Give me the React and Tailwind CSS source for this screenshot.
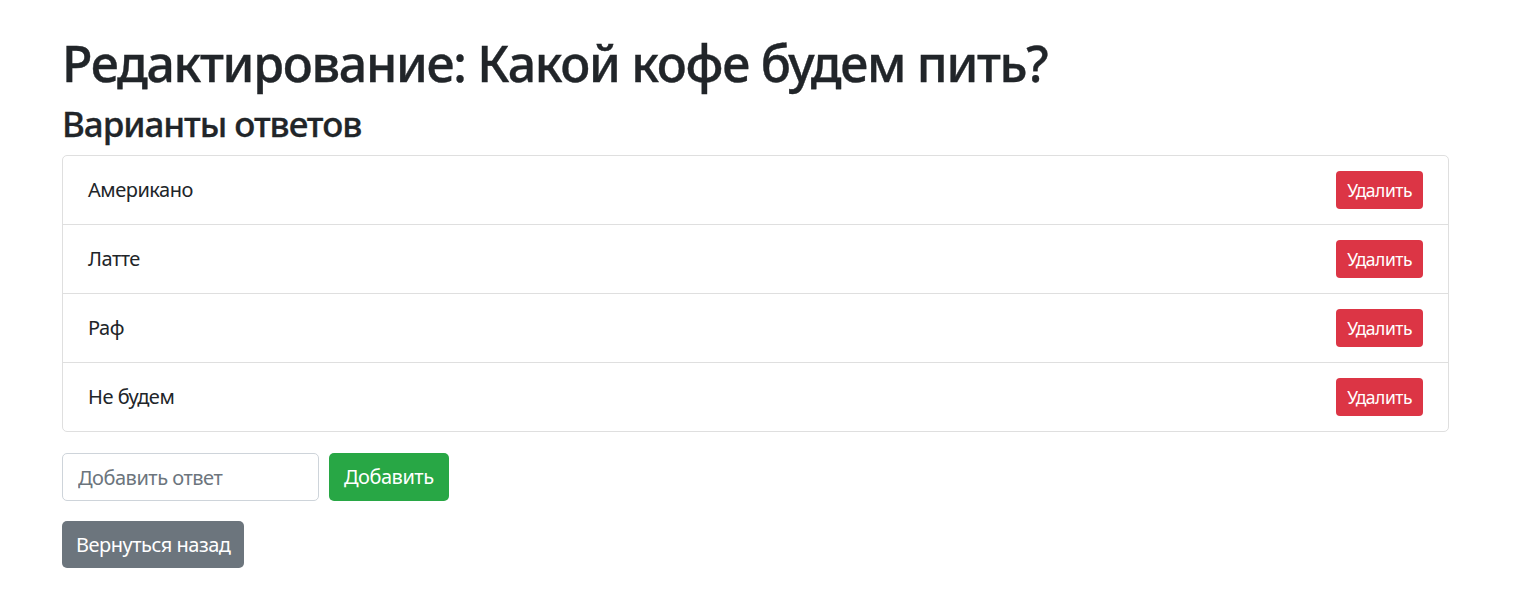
import React, { useState } from "react";

function App() {
  const [answers, setAnswers] = useState(["Американо", "Латте", "Раф", "Не будем"]);
  const [text, setText] = useState("");

  const addAnswer = (e) => {
    e.preventDefault();
    if (!text.trim()) return;
    setAnswers([...answers, text.trim()]);
    setText("");
  };

  return (
    <div className="min-h-screen bg-white font-['Noto_Sans',sans-serif] tracking-[-0.03em] text-[#212529]">
      <div className="mx-auto max-w-[1425px] pl-[18px] pr-[20px] pt-[33px]">
        <h1 className="mb-[10px] text-[50px] font-medium leading-[1.2] tracking-[-0.026em] [-webkit-text-stroke:0.4px_#212529]">
          Редактирование: Какой кофе будем пить?
        </h1>
        <h3 className="mb-[10px] text-[35px] font-medium leading-[1.2] tracking-[-0.03em] [-webkit-text-stroke:0.3px_#212529]">
          Варианты ответов
        </h3>
        <ul className="rounded-[5px] border border-[#dfdfdf]">
          {answers.map((item, i) => (
            <li
              key={i}
              className="flex items-center justify-between border-[#dfdfdf] px-[25px] py-[15px] text-[20px] leading-[1.5] [&:not(:last-child)]:border-b"
            >
              <span>{item}</span>
              <button
                className="h-[38px] rounded-[4px] bg-[#dc3545] px-[11px] text-[17.5px] leading-[1.5] text-white"
                onClick={() => setAnswers(answers.filter((_, j) => j !== i))}
              >
                Удалить
              </button>
            </li>
          ))}
        </ul>
        <form className="mt-[21px] flex gap-[10px]" onSubmit={addAnswer}>
          <input
            className="h-[48px] w-[257px] rounded-[5px] border border-[#ced4da] px-[15px] text-[20px] outline-none placeholder:text-[#6c757d]"
            placeholder="Добавить ответ"
            value={text}
            onChange={(e) => setText(e.target.value)}
          />
          <button className="h-[48px] rounded-[5px] bg-[#28a745] px-[15px] text-[20px] text-white">
            Добавить
          </button>
        </form>
        <button className="mt-[20px] h-[47px] rounded-[5px] bg-[#6c757d] px-[14px] text-[20px] text-white">
          Вернуться назад
        </button>
      </div>
    </div>
  );
}
export default App;
